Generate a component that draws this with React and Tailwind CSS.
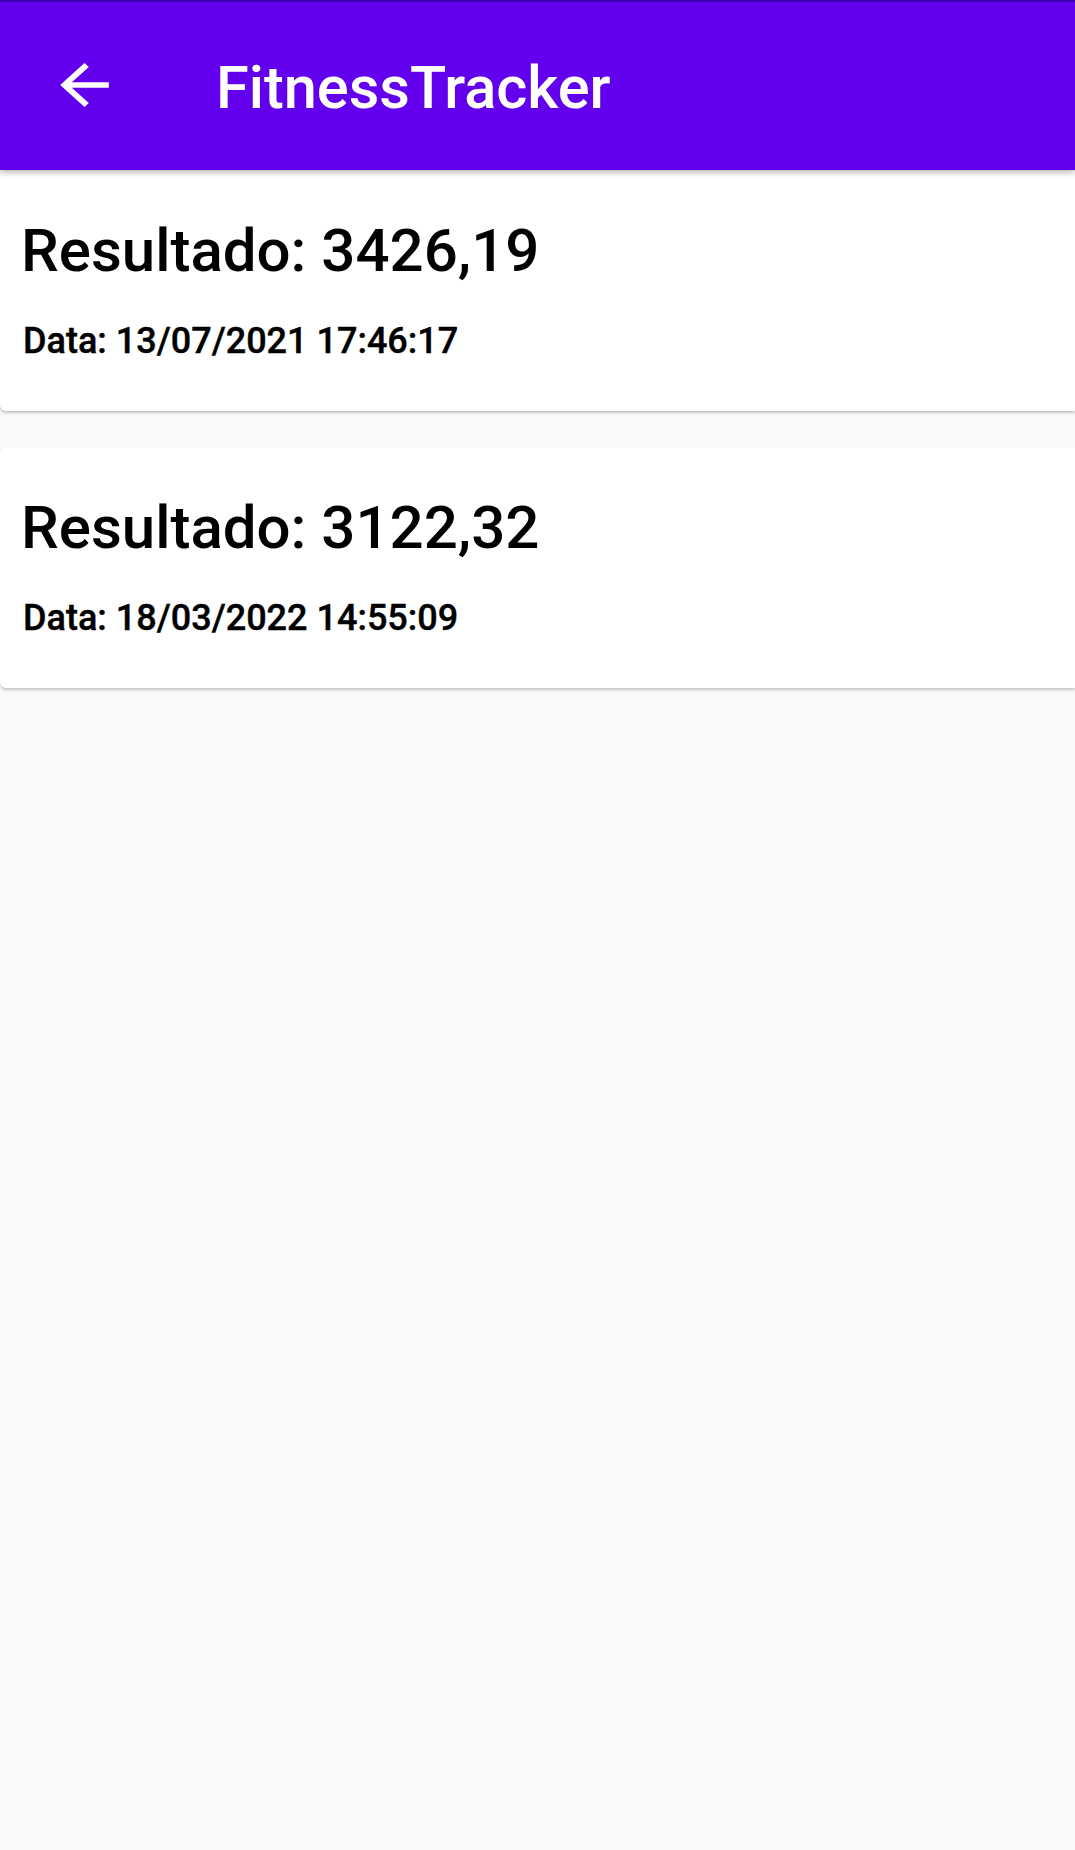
const results = [
    { value: '3426,19', date: '13/07/2021 17:46:17' },
    { value: '3122,32', date: '18/03/2022 14:55:09' },
];

function ArrowBack() {
    return (
        <svg viewBox="0 0 24 24" preserveAspectRatio="none" className="w-[73px] h-[66px] fill-white">
            <path d="M20 11H7.83l5.59-5.59L12 4l-8 8 8 8 1.41-1.41L7.83 13H20v-2z" />
        </svg>
    );
}

function ResultCard({ value, date }) {
    return (
        <div className="bg-white rounded-l-[6px] shadow-[0_2px_3px_rgba(0,0,0,0.22)] pl-[21px] pt-[50px] pb-[52px]">
            <p className="text-[60px] leading-[60px] font-medium text-black">Resultado: {value}</p>
            <p className="mt-[42px] ml-[2px] text-[36px] leading-[36px] font-medium text-black [-webkit-text-stroke:0.4px_black]">Data: {date}</p>
        </div>
    );
}

export default function App() {
    return (
        <div className="min-h-[1850px] bg-[#fafafa] font-['Roboto','Noto_Sans',sans-serif]">
            <header className="relative z-10 border-t-2 border-[#3700b3] bg-[#6200ee] h-[170px] flex items-center shadow-[0_3px_6px_rgba(0,0,0,0.25)]">
                <div className="ml-[48px] -mt-[2px]">
                    <ArrowBack />
                </div>
                <h1 className="ml-[95px] mt-[6px] text-[59.5px] leading-none font-medium text-white">FitnessTracker</h1>
            </header>
            <main className="flex flex-col gap-[37px] pt-[1px]">
                {results.map((r) => (
                    <ResultCard key={r.date} value={r.value} date={r.date} />
                ))}
            </main>
        </div>
    );
}
